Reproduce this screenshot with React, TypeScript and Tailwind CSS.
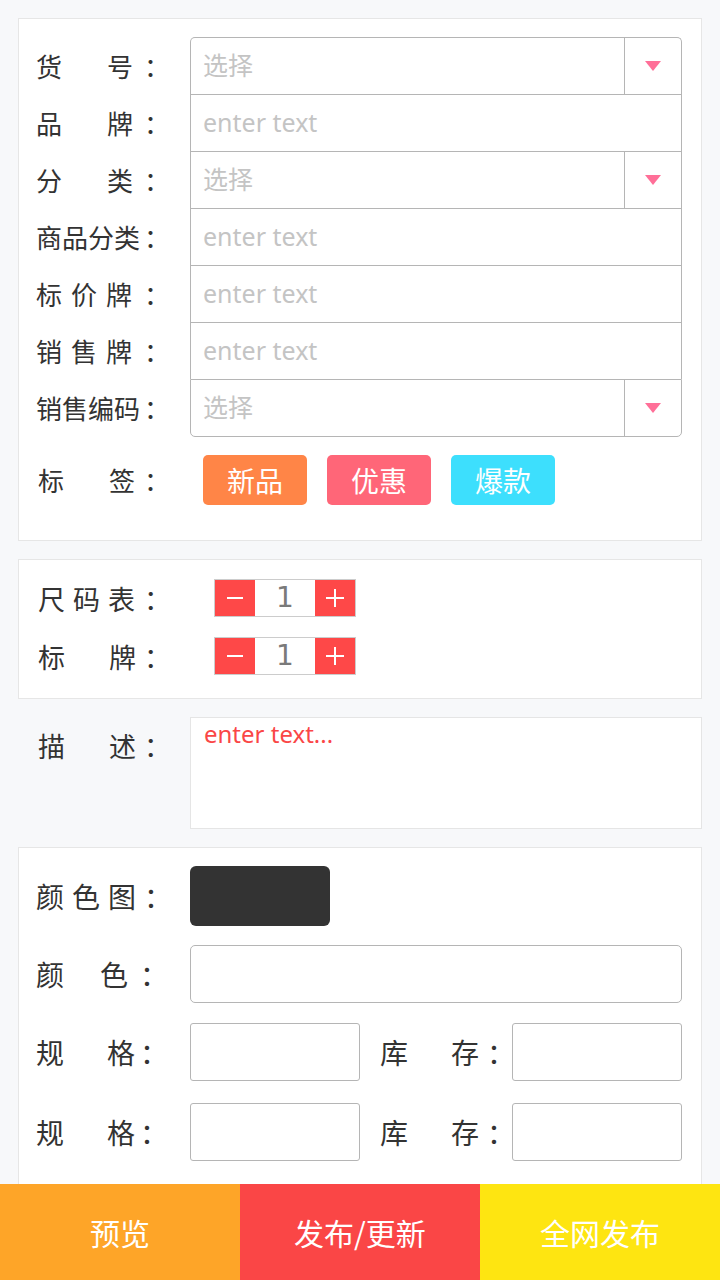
import React from 'react';

const font = { fontFamily: '"Noto Sans", "Noto Sans CJK SC", sans-serif' };
const cjk = { fontFamily: '"Noto Sans CJK SC", sans-serif' };

const Arrow = () => (
  <svg width="16" height="10" viewBox="0 0 16 10">
    <polygon points="0,0 16,0 8,10" fill="#ff6f98" />
  </svg>
);

// label: characters, then colon in a fixed cell at the right end
const L: React.FC<{ chars: string[]; gap: string; size?: string; w?: string }> = ({ chars, gap, size, w }) => (
  <div className={`flex items-center text-[#333333] leading-none ${size ?? 'text-[26px]'} ${w ?? 'w-[130px]'}`} style={cjk}>
    <div className={`flex ${gap}`}>
      {chars.map((c, i) => (
        <span key={i}>{c}</span>
      ))}
    </div>
    <span className="flex-1" />
    <span className="w-[26px] -mr-[4px] text-center">：</span>
  </div>
);

type Row = { label: React.ReactNode; placeholder: string; select?: boolean };

const rows: Row[] = [
  { label: <L chars={['货', '号']} gap="gap-[45px]" />, placeholder: '选择', select: true },
  { label: <L chars={['品', '牌']} gap="gap-[45px]" />, placeholder: 'enter text' },
  { label: <L chars={['分', '类']} gap="gap-[45px]" />, placeholder: '选择', select: true },
  { label: <L chars={['商', '品', '分', '类']} gap="gap-0" />, placeholder: 'enter text' },
  { label: <L chars={['标', '价', '牌']} gap="gap-[9px]" />, placeholder: 'enter text' },
  { label: <L chars={['销', '售', '牌']} gap="gap-[9px]" />, placeholder: 'enter text' },
  { label: <L chars={['销', '售', '编', '码']} gap="gap-0" />, placeholder: '选择', select: true },
];

const Stepper = () => (
  <div className="flex h-[38px] border border-[#cccccc]">
    <div className="w-[40px] bg-[#fe4848] flex items-center justify-center">
      <div className="w-[16px] h-[2px] bg-white" />
    </div>
    <div className="w-[60px] bg-white flex items-center justify-center text-[28px] text-[#7a7a7a]" style={{ fontFamily: '"DejaVu Sans", sans-serif' }}>
      1
    </div>
    <div className="w-[40px] bg-[#fe4848] flex items-center justify-center relative">
      <div className="w-[18px] h-[2px] bg-white" />
      <div className="absolute w-[2px] h-[18px] bg-white" />
    </div>
  </div>
);

export default function App() {
  return (
    <div className="min-h-screen bg-[#f7f8fa] pt-[18px] pb-[96px]" style={font}>
      {/* basic info */}
      <div className="mx-[18px] bg-white border border-[#e6e6e6] pl-[17px] pr-[19px] pt-[18px] pb-[35px]">
        <div className="flex flex-col">
          {rows.map((r, i) => (
            <div key={i} className="flex h-[57px] items-stretch">
              <div className="w-[154px] flex items-center">{r.label}</div>
              <div
                className={`flex-1 flex border-x border-t border-[#b5b5b5] ${i === 0 ? 'rounded-t-[5px]' : ''} ${
                  i === rows.length - 1 ? 'rounded-b-[5px] border-b h-[58px]' : ''
                }`}
              >
                <div className="flex-1 flex items-center pl-[12px] text-[25px] text-[#c4c4c4]">{r.placeholder}</div>
                {r.select && (
                  <div className="w-[57px] border-l border-[#b5b5b5] flex items-center justify-center">
                    <Arrow />
                  </div>
                )}
              </div>
            </div>
          ))}
        </div>
        <div className="flex items-center mt-[19px] h-[50px]">
          <div className="w-[167px] flex items-center pl-[2px]">
            <L chars={['标', '签']} gap="gap-[45px]" w="w-[128px]" />
          </div>
          <div className="flex gap-[20px] text-[28px] text-white" style={cjk}>
            <div className="w-[104px] h-[50px] rounded-[5px] bg-[#ff8547] flex items-center justify-center">新品</div>
            <div className="w-[104px] h-[50px] rounded-[5px] bg-[#ff6678] flex items-center justify-center">优惠</div>
            <div className="w-[104px] h-[50px] rounded-[5px] bg-[#3ddffd] flex items-center justify-center">爆款</div>
          </div>
        </div>
      </div>

      {/* counts */}
      <div className="mx-[18px] mt-[18px] bg-white border border-[#e6e6e6] pl-[19px] pt-[19px] pb-[23px] flex flex-col gap-[20px]">
        <div className="flex items-center">
          <div className="w-[176px]">
            <L chars={['尺', '码', '表']} gap="gap-[8px]" size="text-[27px]" w="w-[128px]" />
          </div>
          <Stepper />
        </div>
        <div className="flex items-center">
          <div className="w-[176px]">
            <L chars={['标', '牌']} gap="gap-[44px]" size="text-[27px]" w="w-[128px]" />
          </div>
          <Stepper />
        </div>
      </div>

      {/* description */}
      <div className="flex mt-[18px] pl-[38px] pr-[18px]">
        <div className="w-[152px] pt-[15px]">
          <L chars={['描', '述']} gap="gap-[44px]" size="text-[27px]" w="w-[128px]" />
        </div>
        <div className="flex-1 h-[112px] bg-white border border-[#e5e5e5] pl-[13px] leading-[32px] text-[24px] text-[#fa4646]">
          enter text...
        </div>
      </div>

      {/* colours */}
      <div className="mx-[18px] mt-[18px] bg-white border border-[#e6e6e6] pl-[17px] pr-[19px] pt-[18px] pb-[40px] flex flex-col">
        <div className="flex items-center h-[60px]">
          <div className="w-[154px]">
            <L chars={['颜', '色', '图']} gap="gap-[8px]" size="text-[28px]" />
          </div>
          <div className="w-[140px] h-[60px] rounded-[6px] bg-[#333333]" />
        </div>
        <div className="flex items-center h-[58px] mt-[19px]">
          <div className="w-[154px]">
            <L chars={['颜', '色']} gap="gap-[36px]" size="text-[28px]" w="w-[126px]" />
          </div>
          <div className="flex-1 h-[58px] rounded-[5px] border border-[#b5b5b5]" />
        </div>
        {[0, 1].map((k) => (
          <div key={k} className={`flex items-center h-[58px] ${k === 0 ? 'mt-[20px]' : 'mt-[22px]'}`}>
            <div className="w-[154px]">
              <L chars={['规', '格']} gap="gap-[43px]" size="text-[28px]" w="w-[126px]" />
            </div>
            <div className="w-[170px] h-[58px] rounded-[3px] border border-[#b5b5b5]" />
            <div className="w-[152px] pl-[20px]">
              <L chars={['库', '存']} gap="gap-[43px]" size="text-[28px]" w="w-[129px]" />
            </div>
            <div className="flex-1 h-[58px] rounded-[3px] border border-[#b5b5b5]" />
          </div>
        ))}
      </div>

      {/* bottom bar */}
      <div className="fixed bottom-0 left-0 right-0 h-[96px] grid grid-cols-3 text-[30px] text-white" style={cjk}>
        <div className="bg-[#fea528] flex items-center justify-center">预览</div>
        <div className="bg-[#fa4646] flex items-center justify-center">发布/更新</div>
        <div className="bg-[#fee511] flex items-center justify-center">全网发布</div>
      </div>
    </div>
  );
}
